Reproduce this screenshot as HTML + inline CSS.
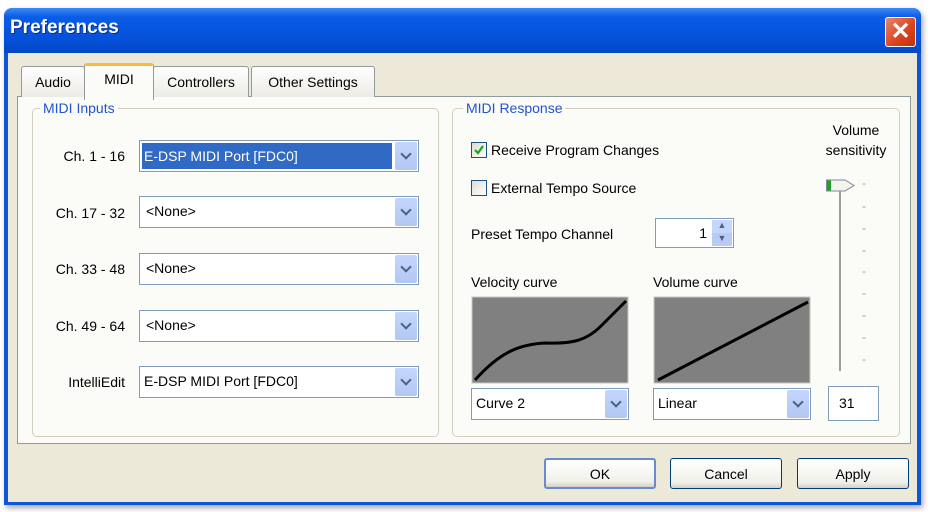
<!DOCTYPE html><html><head><style>
body{margin:0;width:932px;height:512px;background:#fff;font-family:"Liberation Sans",sans-serif;font-size:14px;color:#000;position:relative;overflow:hidden}
.a{position:absolute}
.win{left:4px;top:8px;width:917px;height:497px;background:#0b57d8;border-radius:8px 8px 0 0;box-shadow:2px 3px 6px rgba(0,0,0,.35)}
.title{left:4px;top:8px;width:917px;height:45px;border-radius:8px 8px 0 0;background:linear-gradient(#3d8cf5,#0a5ce6 20%,#0451da 70%,#0447c2)}
.body{left:8px;top:53px;width:909px;height:449px;background:#ece9d8}
.panel{left:17px;top:96px;width:892px;height:346px;background:#fbfbf8;border:1px solid #919b9c}
.tab{top:66px;height:30px;background:linear-gradient(#fff,#ecebe5);border:1px solid #919b9c;border-bottom:none;border-radius:3px 3px 0 0;text-align:center;line-height:30px}
.grp{border:1px solid #d0d0bf;border-radius:5px}
.leg{background:#fbfbf8;color:#2353cf;padding:0 3px;line-height:16px}
.cb{height:30px;background:#fff;border:1px solid #7f9db9;box-sizing:border-box;line-height:28px;padding-left:6px}
.dd{position:absolute;right:1px;top:1px;width:22px;height:26px;background:linear-gradient(#c4d6fb,#b2c7f4);border-radius:2px}
.dd:after{content:"";position:absolute;left:7px;top:8px;width:6px;height:6px;border-right:2px solid #4d6185;border-bottom:2px solid #4d6185;transform:rotate(45deg)}
.lbl{text-align:right;width:90px}
.btn{top:458px;width:112px;height:31px;border:1px solid #003c74;border-radius:3px;background:linear-gradient(#fff,#f0f0ea 80%,#d6d0c5);text-align:center;line-height:31px;box-sizing:border-box}
.chk{width:14px;height:14px;border:1px solid #1c5180;background:linear-gradient(135deg,#dcdcd5,#fff)}
.tick{color:#9a9a9a;font-size:12px;left:862px}
</style></head><body>
<div class="a win"></div>
<div class="a title"></div>
<div class="a" style="left:10px;top:17px;color:#fff;font-weight:bold;font-size:19px;text-shadow:1px 1px #0a2a8a">Preferences</div>
<div class="a" style="left:885px;top:17px;width:31px;height:30px;border:1px solid #fff;border-radius:3px;background:linear-gradient(135deg,#e8846a,#d9431c 60%,#c0330f);box-sizing:border-box;color:#fff;font-size:24px;line-height:27px;text-align:center;font-weight:bold">✕</div>
<div class="a body"></div>
<div class="a panel"></div>
<div class="a tab" style="left:21px;width:62px">Audio</div>
<div class="a tab" style="left:153px;width:94px">Controllers</div>
<div class="a tab" style="left:251px;width:122px">Other Settings</div>
<div class="a tab" style="left:84px;top:63px;height:34px;width:68px;background:#fbfbf8;border-top:3px solid #ffb93a;line-height:26px">MIDI</div>

<div class="a grp" style="left:32px;top:108px;width:405px;height:327px"></div>
<div class="a leg" style="left:40px;top:100px">MIDI Inputs</div>
<div class="a lbl" style="left:35px;top:148px">Ch. 1 - 16</div>
<div class="a cb" style="left:139px;top:140px;width:280px;height:32px;padding:2px"><div style="background:#316ac5;color:#fff;width:248px;height:26px;line-height:26px;padding-left:2px">E-DSP MIDI Port [FDC0]</div><span class="dd" style="height:28px"></span></div>
<div class="a lbl" style="left:35px;top:205px">Ch. 17 - 32</div>
<div class="a cb" style="left:139px;top:196px;width:280px;height:32px">&lt;None&gt;<span class="dd" style="height:28px"></span></div>
<div class="a lbl" style="left:35px;top:261px">Ch. 33 - 48</div>
<div class="a cb" style="left:139px;top:253px;width:280px;height:32px">&lt;None&gt;<span class="dd" style="height:28px"></span></div>
<div class="a lbl" style="left:35px;top:318px">Ch. 49 - 64</div>
<div class="a cb" style="left:139px;top:310px;width:280px;height:32px">&lt;None&gt;<span class="dd" style="height:28px"></span></div>
<div class="a lbl" style="left:35px;top:374px">IntelliEdit</div>
<div class="a cb" style="left:139px;top:366px;width:280px;height:32px;padding-left:4px">E-DSP MIDI Port [FDC0]<span class="dd" style="height:28px"></span></div>

<div class="a grp" style="left:452px;top:108px;width:446px;height:327px"></div>
<div class="a leg" style="left:463px;top:100px">MIDI Response</div>
<div class="a" style="left:816px;top:120px;width:80px;text-align:center;line-height:20px">Volume<br>sensitivity</div>
<div class="a chk" style="left:471px;top:142px"></div>
<svg class="a" style="left:473px;top:144px" width="12" height="12"><path d="M2 6 L5 9 L10 2" stroke="#21a121" stroke-width="2.2" fill="none"/></svg>
<div class="a" style="left:491px;top:142px">Receive Program Changes</div>
<div class="a chk" style="left:471px;top:180px"></div>
<div class="a" style="left:491px;top:180px">External Tempo Source</div>
<div class="a" style="left:471px;top:226px">Preset Tempo Channel</div>
<div class="a" style="left:655px;top:218px;width:79px;height:30px;border:1px solid #7f9db9;background:#fff;box-sizing:border-box"><span class="a" style="right:26px;top:6px">1</span><span class="a" style="right:1px;top:1px;width:20px;height:13px;background:#c4d6fb;font-size:9px;text-align:center;color:#4d6185">▲</span><span class="a" style="right:1px;top:14px;width:20px;height:13px;background:#b8cbf6;font-size:9px;text-align:center;color:#4d6185">▼</span></div>
<div class="a" style="left:471px;top:274px">Velocity curve</div>
<div class="a" style="left:653px;top:274px">Volume curve</div>
<svg class="a" style="left:471px;top:296px" width="158" height="88"><rect x="1" y="1" width="156" height="86" fill="#808080" stroke="#c8c8c0"/><path d="M4 84 C30 55 50 48 75 47 C100 48 115 45 130 30 L155 5" stroke="#000" stroke-width="3" fill="none"/></svg>
<svg class="a" style="left:653px;top:296px" width="158" height="88"><rect x="1" y="1" width="156" height="86" fill="#808080" stroke="#c8c8c0"/><path d="M5 84 L155 6" stroke="#000" stroke-width="3" fill="none"/></svg>
<div class="a cb" style="left:471px;top:388px;width:158px;height:32px;padding-left:4px">Curve 2<span class="dd" style="height:28px"></span></div>
<div class="a cb" style="left:653px;top:388px;width:158px;height:32px;padding-left:4px">Linear<span class="dd" style="height:28px"></span></div>
<div class="a" style="left:828px;top:386px;width:51px;height:35px;border:1px solid #7f9db9;background:#fff;box-sizing:border-box;padding:8px 0 0 10px">31</div>
<div class="a" style="left:839px;top:185px;width:2px;height:186px;background:#9d9d92;border-right:1px solid #fff"></div>
<svg class="a" style="left:825px;top:178px" width="32" height="15"><path d="M1.5 2 H20 L29 7.5 L20 13 H1.5 Z" fill="#f4f4ee" stroke="#7a8a99"/><rect x="2" y="2.5" width="4" height="10" fill="#21a121"/></svg>
<div class="a tick" style="top:176px">-</div><div class="a tick" style="top:199px">-</div><div class="a tick" style="top:221px">-</div><div class="a tick" style="top:243px">-</div><div class="a tick" style="top:264px">-</div><div class="a tick" style="top:286px">-</div><div class="a tick" style="top:308px">-</div><div class="a tick" style="top:330px">-</div><div class="a tick" style="top:352px">-</div>

<div class="a btn" style="left:544px;border:2px solid #6a8ad0;line-height:28px">OK</div>
<div class="a btn" style="left:670px">Cancel</div>
<div class="a btn" style="left:797px">Apply</div>
</body></html>
